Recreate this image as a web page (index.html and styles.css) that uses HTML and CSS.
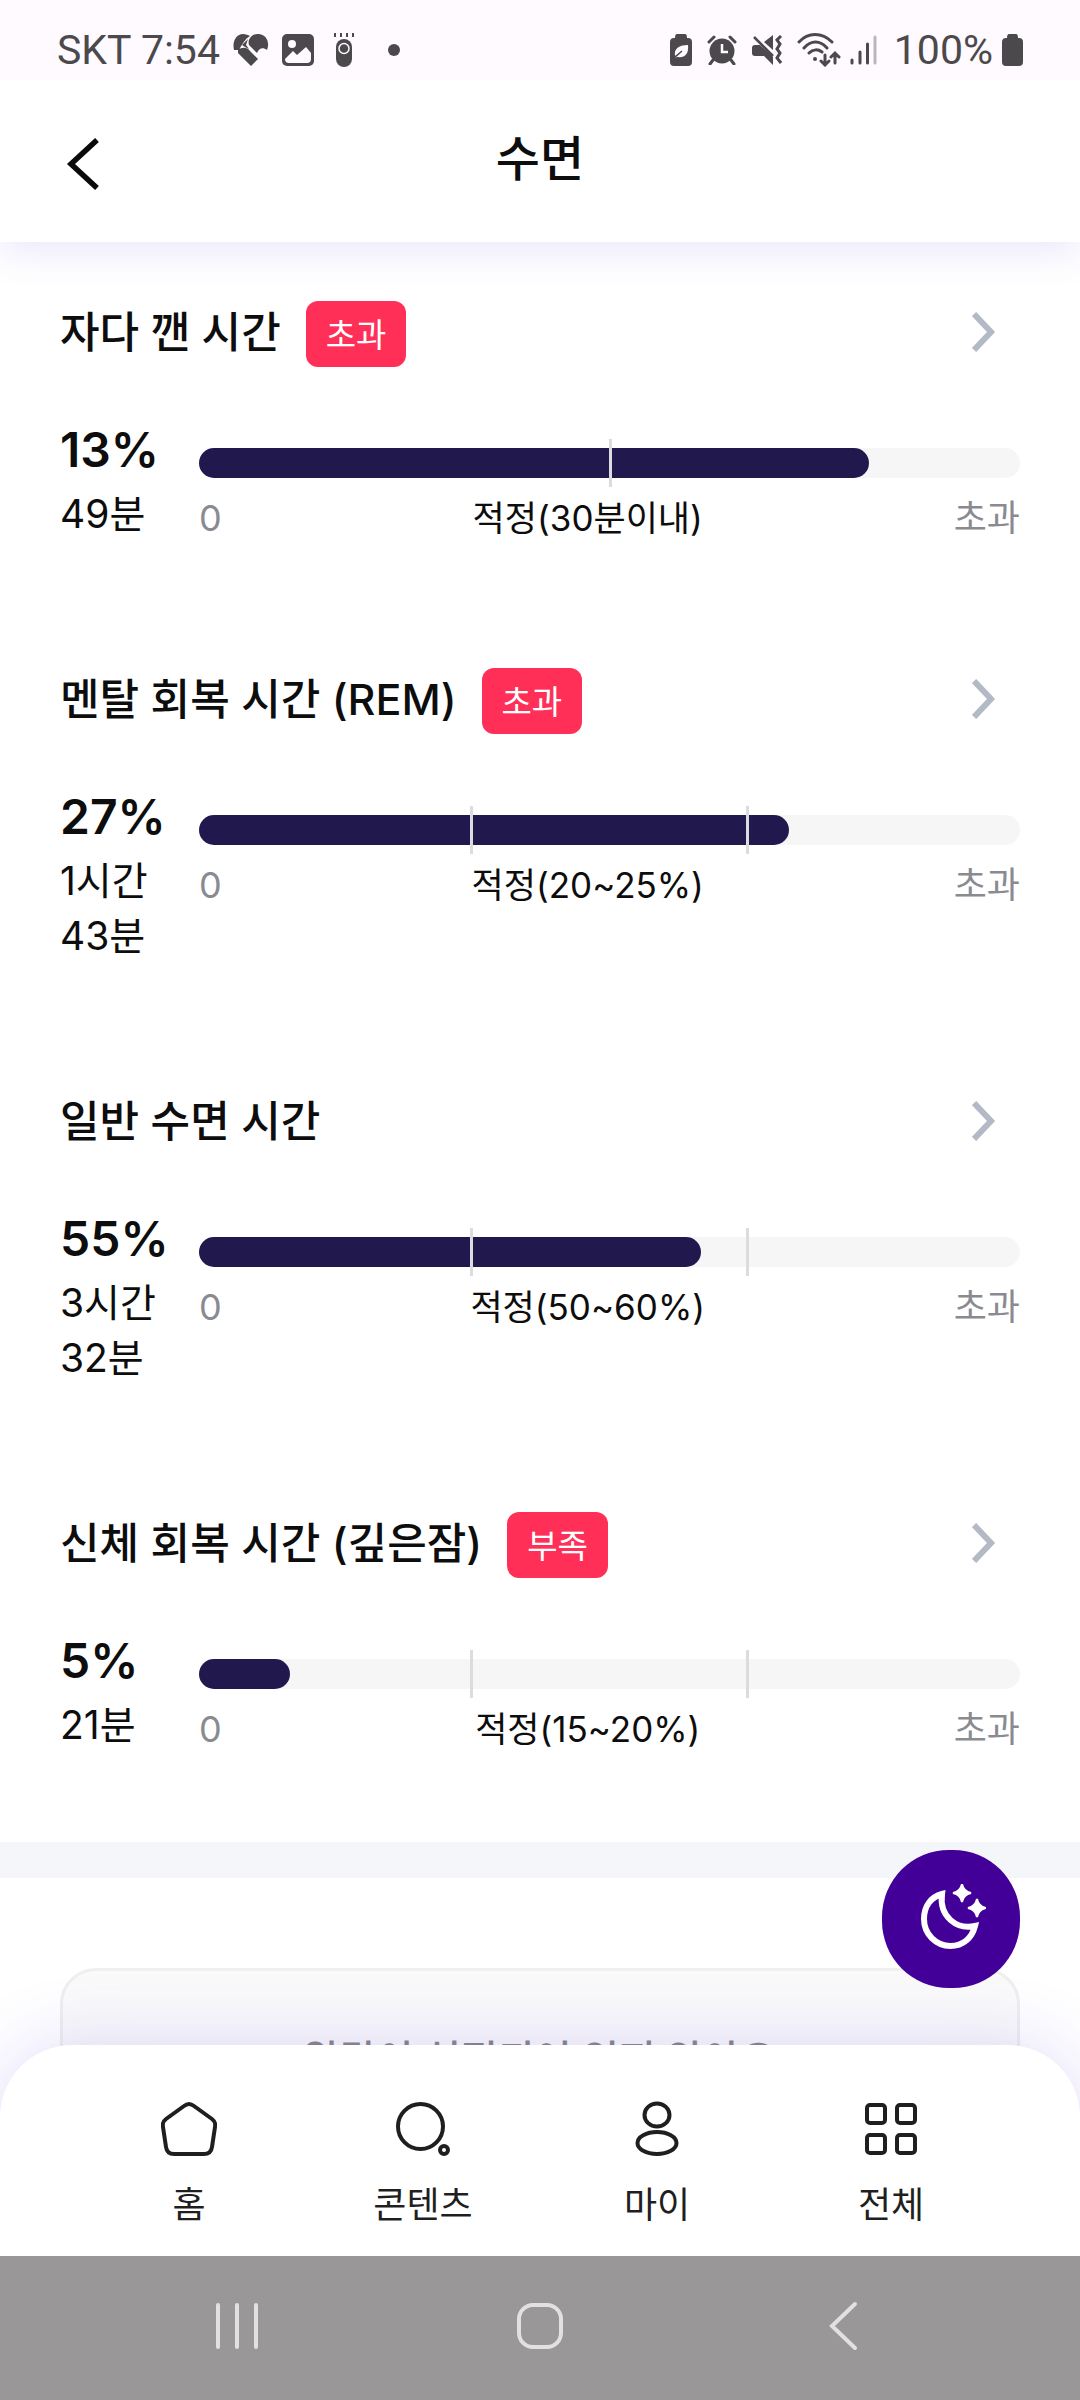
FILE: index.html
```html
<!DOCTYPE html>
<html lang="ko">
<head>
<meta charset="utf-8">
<meta name="viewport" content="width=device-width, initial-scale=1">
<title>수면</title>
<link rel="stylesheet" href="styles.css">
</head>
<body>
<div class="app">
  <div class="status">
    <div class="status-left">
      <span>SKT 7:54</span>
      <svg width="36" height="34" viewBox="0 0 36 34" fill="#4b494b"><path d="M1 17C-1 9 3 1 10 1c3 0 5 1 7 2-5 3-8 8-11 14zM5 17c4-3 9-3 12 1l8 8-7 7L5 20zM9 12l6-6-2 6 3 4-4-2zM16 12C14 6 20 0 26 1c8 1 11 9 8 16-4-3-8-2-10 3z"/></svg>
      <svg width="32" height="32" viewBox="0 0 32 32"><rect width="32" height="32" rx="5" fill="#4b494b"/><circle cx="10" cy="10" r="4" fill="#fffaff"/><path d="M3 25l8-8 4 4 9-8 5 6v6q0 4-4 4H7q-4 0-4-4z" fill="#fffaff"/></svg>
      <svg class="st-remote" width="22" height="34" viewBox="0 0 22 34"><path d="M2 0v4M8 0v4M14 0v4M20 0v4" stroke="#4b494b" stroke-width="2"/><rect x="3" y="6" width="16" height="28" rx="8" fill="#4b494b"/><circle cx="11" cy="15.500" r="5" fill="none" stroke="#fffaff" stroke-width="1.500"/></svg>
      <svg class="st-dot" width="12" height="12" viewBox="0 0 12 12"><circle cx="6" cy="6" r="6" fill="#4b494b"/></svg>
    </div>
    <div class="status-right">
      <svg width="22" height="32" viewBox="0 0 22 32"><path d="M7 0h8q2 0 2 4h1q4 0 4 4v20q0 4-4 4H4q-4 0-4-4V8q0-4 4-4h1q0-4 2-4z" fill="#4b494b"/><path d="M5 22c-1-7 3-11 13-11 1 9-3 13-11 12l-3 1 7-6z" fill="#fffaff"/><path d="M4 24l8-7" stroke="#4b494b" stroke-width="1.500"/></svg>
      <svg width="30" height="30" viewBox="0 0 30 30" fill="none" stroke="#4b494b"><circle cx="15" cy="16" r="12.500" fill="#4b494b" stroke="none"/><path d="M2 7l5-5M28 7l-5-5M6 25l-3 4M24 25l3 4" stroke-width="3" stroke-linecap="round"/><path d="M15 9v8h6" stroke="#fffaff" stroke-width="2.500"/></svg>
      <svg width="30" height="30" viewBox="0 0 30 30" fill="none" stroke="#4b494b"><path d="M0 13q0-3 3-3h5l13 12v8l-9-9H3q-3 0-3-3zM12 7l9-7v15z" fill="#4b494b" stroke="none"/><path d="M2 2l19 19" stroke-width="2.500"/><path d="M29 1l-4 4 3 4-3 5 3 4-3 5 4 5" stroke-width="3"/></svg>
      <svg width="44" height="34" viewBox="0 0 44 34" fill="none" stroke="#4b494b" stroke-width="3" stroke-linecap="round"><path d="M2 9C11-1 25-1 35 9M7 15c7-8 16-8 23 0M12 20c4-4 9-4 13-1M28 22v10M24 28l4 4 4-4M38 30V20M34 24l4-4 4 4"/><circle cx="18" cy="26" r="2" fill="#4b494b" stroke="none"/></svg>
      <svg class="st-signal" width="27" height="30" viewBox="0 0 27 30" stroke="#4b494b" stroke-width="3" stroke-linecap="round"><path d="M2 25v3M10 17v11M17.500 9v19"/><path d="M25 2v26" stroke="#bab6ba"/></svg>
      <span class="st-pct">100%</span>
      <svg width="21" height="32" viewBox="0 0 21 32"><path d="M7 0h7q2 0 2 4h1q4 0 4 4v20q0 4-4 4H4q-4 0-4-4V8q0-4 4-4h1q0-4 2-4z" fill="#4b494b"/></svg>
    </div>
  </div>

  <header class="header">
    <button class="back" aria-label="뒤로"><svg width="36" height="52" viewBox="0 0 36 52" fill="none" stroke="#0b0b0b" stroke-width="5.500"><path d="M31 2L5 26l26 24"/></svg></button>
    <h1 class="title">수면</h1>
  </header>

  <main class="content">
    <div class="stages">
      <section class="stage">
        <div class="stage-head">
          <h2>자다 깬 시간</h2><span class="badge">초과</span>
          <a class="more" href="#wake" aria-label="자다 깬 시간 상세"><svg width="24" height="40" viewBox="0 0 24 40"><path d="M2 2l17 18L2 38" /></svg></a>
        </div>
        <div class="stage-body">
          <div class="value"><strong>13%</strong><span>49분</span></div>
          <div class="chart">
            <div class="bar"><div class="fill" style="width:81.6%"></div><i class="tick half"></i></div>
            <div class="scale"><span>0</span><span class="range">적정(30분이내)</span><span>초과</span></div>
          </div>
        </div>
      </section>

      <section class="stage">
        <div class="stage-head">
          <h2>멘탈 회복 시간 (REM)</h2><span class="badge">초과</span>
          <a class="more" href="#rem" aria-label="멘탈 회복 시간 상세"><svg width="24" height="40" viewBox="0 0 24 40"><path d="M2 2l17 18L2 38" /></svg></a>
        </div>
        <div class="stage-body">
          <div class="value"><strong>27%</strong><span>1시간 43분</span></div>
          <div class="chart">
            <div class="bar"><div class="fill" style="width:71.9%"></div><i class="tick low"></i><i class="tick high"></i></div>
            <div class="scale"><span>0</span><span class="range">적정(20~25%)</span><span>초과</span></div>
          </div>
        </div>
      </section>

      <section class="stage">
        <div class="stage-head">
          <h2>일반 수면 시간</h2>
          <a class="more" href="#light" aria-label="일반 수면 시간 상세"><svg width="24" height="40" viewBox="0 0 24 40"><path d="M2 2l17 18L2 38" /></svg></a>
        </div>
        <div class="stage-body">
          <div class="value"><strong>55%</strong><span>3시간 32분</span></div>
          <div class="chart">
            <div class="bar"><div class="fill" style="width:61.1%"></div><i class="tick low"></i><i class="tick high"></i></div>
            <div class="scale"><span>0</span><span class="range">적정(50~60%)</span><span>초과</span></div>
          </div>
        </div>
      </section>

      <section class="stage">
        <div class="stage-head">
          <h2>신체 회복 시간 (깊은잠)</h2><span class="badge">부족</span>
          <a class="more" href="#deep" aria-label="신체 회복 시간 상세"><svg width="24" height="40" viewBox="0 0 24 40"><path d="M2 2l17 18L2 38" /></svg></a>
        </div>
        <div class="stage-body">
          <div class="value"><strong>5%</strong><span>21분</span></div>
          <div class="chart">
            <div class="bar"><div class="fill" style="width:11.1%"></div><i class="tick low"></i><i class="tick high"></i></div>
            <div class="scale"><span>0</span><span class="range">적정(15~20%)</span><span>초과</span></div>
          </div>
        </div>
      </section>
    </div>

    <div class="alarm">
      <div class="alarm-card">알람이 설정되어 있지 않아요</div>
    </div>
  </main>

  <nav class="tabs">
    <button class="fab" aria-label="수면 측정"><svg width="70" height="70" viewBox="0 0 70 70"><path d="M26 10C15 13 8 22 8 35c0 15 12 27 26.500 27C47 62 56 54 59 42 41 46 23 33 26 10z" fill="none" stroke="#fff" stroke-width="6"/><path d="M46 0q1.500 7.500 9 9-7.500 1.500-9 9-1.500-7.500-9-9 7.500-1.500 9-9zM61 15q1.500 7.500 9 9-7.500 1.500-9 9-1.500-7.500-9-9 7.500-1.500 9-9z" fill="#fff" stroke="#fff" stroke-width="2"/></svg></button>
    <a class="tab" href="#home"><svg width="56" height="56" viewBox="0 0 56 56"><path d="M23 5q5-4 10 0l18 13q4 3 3 8l-3 20q-1 7-8 7H13q-7 0-8-7L2 26q-1-5 3-8z"/></svg><span>홈</span></a>
    <a class="tab" href="#contents"><svg width="56" height="56" viewBox="0 0 56 56"><circle cx="25.500" cy="25.500" r="22.500"/><circle cx="49" cy="49" r="4"/></svg><span>콘텐츠</span></a>
    <a class="tab" href="#my"><svg width="56" height="56" viewBox="0 0 56 56"><ellipse cx="28" cy="14" rx="12.500" ry="11.500"/><ellipse cx="28" cy="42" rx="19.500" ry="11"/></svg><span>마이</span></a>
    <a class="tab" href="#all"><svg width="56" height="56" viewBox="0 0 56 56"><rect x="4" y="4" width="18" height="18" rx="3"/><rect x="34" y="4" width="18" height="18" rx="3"/><rect x="4" y="34" width="18" height="18" rx="3"/><rect x="34" y="34" width="18" height="18" rx="3"/></svg><span>전체</span></a>
  </nav>

  <div class="sysnav">
    <button aria-label="최근 앱"><svg width="50" height="50" viewBox="0 0 50 50"><path d="M6 4v42M25 4v42M44 4v42"/></svg></button>
    <button aria-label="홈 화면"><svg width="50" height="50" viewBox="0 0 50 50"><rect x="4" y="4" width="42" height="42" rx="14"/></svg></button>
    <button aria-label="이전"><svg width="50" height="50" viewBox="0 0 50 50"><path d="M37 3L14 25l23 22"/></svg></button>
  </div>
</div>
</body>
</html>
```
FILE: styles.css
```css
* { box-sizing: border-box; }

body {
  margin: 0;
  background: #fff;
  color: #0d0d0d;
  font-family: Inter, "Noto Sans CJK KR", sans-serif;
}

button {
  border: 0;
  padding: 0;
  background: none;
  font: inherit;
  color: inherit;
}

a { color: inherit; text-decoration: none; }
svg { display: block; flex: none; }
h1, h2 { margin: 0; }

.app {
  display: flex;
  flex-direction: column;
  height: 100vh;
}

/* Status bar */
.status {
  position: relative;
  z-index: 3;
  flex: none;
  display: flex;
  justify-content: space-between;
  height: 80px;
  padding: 20px 57px 0;
  background: #fffaff;
  color: #4b494b;
  font: 41px/60px Roboto, sans-serif;
}

.status-left, .status-right {
  display: flex;
  align-items: center;
  height: 60px;
}

.status-left { gap: 13px; }
.status-right { gap: 15px; }
.st-remote { margin-left: 6px; }
.st-dot { margin-left: 20px; }
.st-signal { margin: 0 2px 0 -6px; }
.status-right .st-pct { margin-right: -6px; }

/* Header */
.header {
  position: relative;
  z-index: 2;
  flex: none;
  display: grid;
  grid-template-columns: 1fr auto 1fr;
  align-items: center;
  height: 162px;
  padding: 0 60px;
  background: #fff;
  box-shadow: 0 10px 36px rgba(90, 60, 230, .12);
}

.back { justify-self: start; padding: 6px 0 0 6px; }
.title { padding-bottom: 4px; font-size: 48px; line-height: 60px; font-weight: 500; }

/* Content */
.content {
  flex: 1;
  min-height: 0;
  overflow-y: auto;
  scrollbar-width: none;
}

.stages {
  display: flex;
  flex-direction: column;
  gap: 127px;
  padding: 59px 60px 90px;
}

.stage {
  display: flex;
  flex-direction: column;
  gap: 53px;
}

.stage-head {
  display: flex;
  align-items: center;
  height: 66px;
}

.stage-head h2 {
  padding-bottom: 4px;
  font-size: 43px;
  line-height: 60px;
  font-weight: 500;
}

.badge {
  margin-left: 25px;
  padding: 2px 20px 0;
  border-radius: 12px;
  background: #ff2f57;
  color: #fff;
  font-size: 33px;
  line-height: 64px;
}

.more {
  margin-left: auto;
  padding: 0 24px 4px 0;
}

.more path { fill: none; stroke: #b4bac5; stroke-width: 6; }

.stage-body {
  display: grid;
  grid-template-columns: 139px 1fr;
}

.value { display: flex; flex-direction: column; gap: 6px; }
.value strong { font-size: 48px; line-height: 60px; font-weight: 600; }
.value span { font-size: 39px; line-height: 55px; }

.chart {
  display: flex;
  flex-direction: column;
  gap: 17px;
  padding-top: 28px;
}

.bar {
  position: relative;
  height: 30px;
  border-radius: 15px;
  background: #f6f6f6;
}

.fill {
  height: 100%;
  border-radius: 15px;
  background: #21194d;
}

.tick {
  position: absolute;
  top: -9px;
  width: 3px;
  height: 48px;
  background: #dcdce0;
}

.low { left: 33%; }
.half { left: calc(50% - 1px); }
.high { left: 66.6%; }

.scale {
  display: flex;
  justify-content: space-between;
  color: #8a8b90;
  font-size: 36px;
  line-height: 46px;
}

.range { color: #0d0d0d; font-size: 35px; }

.alarm {
  padding: 90px 60px;
  border-top: 36px solid #f5f6fa;
}

.alarm-card {
  padding: 62px 30px 90px;
  border: 3px solid #efefef;
  border-radius: 36px;
  background: #fafafa;
  color: #88888c;
  text-align: center;
  font-size: 40px;
  line-height: 54px;
  font-weight: 500;
}

/* Bottom tabs, laid over the end of the scrolling content */
.tabs {
  position: relative;
  z-index: 2;
  flex: none;
  display: grid;
  grid-template-columns: repeat(4, 1fr);
  margin-top: -72px;
  padding: 56px 72px 26px;
  border-radius: 72px 72px 0 0;
  background: #fff;
  box-shadow: 0 0 72px rgba(90, 50, 220, .18);
}

.tab {
  display: flex;
  flex-direction: column;
  align-items: center;
  gap: 23px;
  color: #1f1f1f;
  font-size: 36px;
  line-height: 50px;
}

.tab svg { fill: none; stroke: #1f1f1f; stroke-width: 4; }

.fab {
  position: absolute;
  right: 60px;
  bottom: calc(100% + 57px);
  display: grid;
  place-items: center;
  width: 138px;
  height: 138px;
  border-radius: 67px;
  background: #420099;
}

.sysnav {
  position: relative;
  z-index: 3;
  flex: none;
  display: grid;
  grid-template-columns: repeat(3, 1fr);
  height: 144px;
  padding: 0 86px;
  background: #999797;
}

.sysnav button {
  display: flex;
  align-items: center;
  justify-content: center;
  padding-bottom: 4px;
}

.sysnav svg {
  fill: none;
  stroke: #e2e0e2;
  stroke-width: 4;
  stroke-linecap: round;
}
```
